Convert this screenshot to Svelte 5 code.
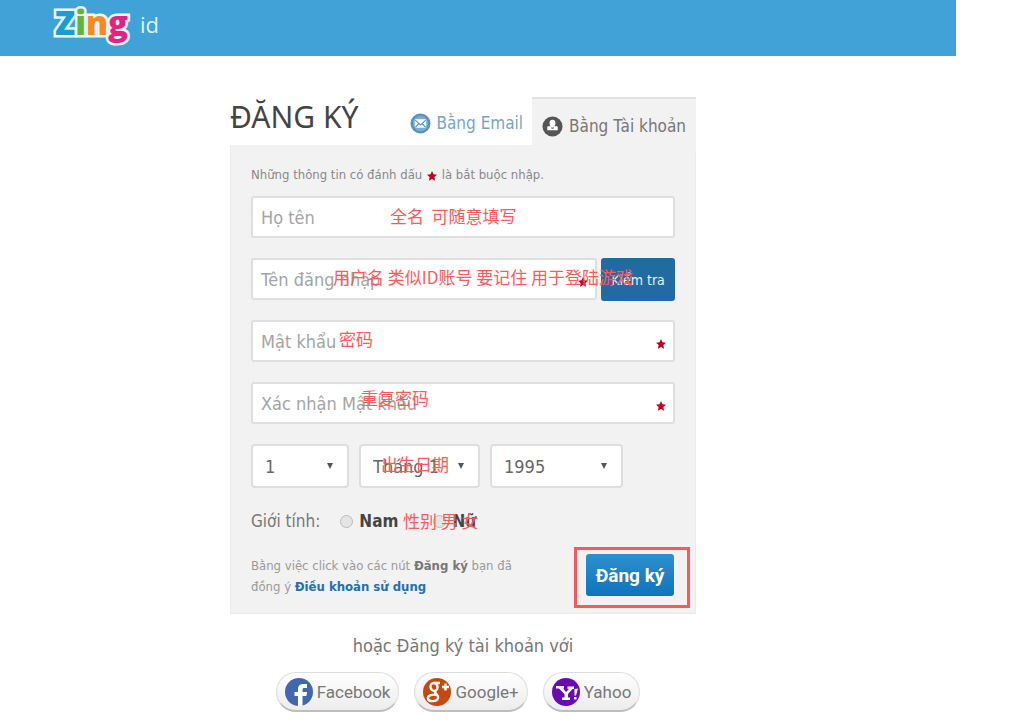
<script>
  const fields = [
    { id: 'fullname', label: 'Họ tên', type: 'text', note: '全名\u00a0 可随意填写', left: 139, top: 8 },
    { id: 'username', label: 'Tên đăng nhập', type: 'text', note: '用户名 类似ID账号 要记住 用于登陆游戏', left: 82, top: 7, star: true, check: true },
    { id: 'password', label: 'Mật khẩu', type: 'password', note: '密码', left: 88, top: 7, star: true },
    { id: 'confirm', label: 'Xác nhận Mật khẩu', type: 'password', note: '重复密码', left: 110, top: 4, star: true }
  ];
  const dates = [
    { id: 'day', label: 'Ngày', value: '1', size: 'small' },
    { id: 'month', label: 'Tháng', value: 'Tháng 1', size: 'medium', note: '出生日期' },
    { id: 'year', label: 'Năm', value: '1995', size: 'large' }
  ];
</script>

{#snippet star()}
  <svg class="star" viewBox="0 0 10 10" aria-hidden="true"><path d="M5 0 6.5 3.2 10 3.7 7.4 6 8 9.7 5 8 2 9.7 2.6 6 0 3.7 3.5 3.2Z" /></svg>
{/snippet}

<header>
  <a class="logo" href="#home" aria-label="Zing id">
    <span class="zing"><span class="z">Z</span><span class="i">i</span><span class="n">n</span><span class="g">g</span></span>
    <span class="id">id</span>
  </a>
</header>

<main>
  <div class="top">
    <h1>ĐĂNG KÝ</h1>
    <nav>
      <a class="tab" href="#email">
        <svg viewBox="0 0 22 22" aria-hidden="true">
          <circle cx="11" cy="11" r="10.5" fill="#5494bd" />
          <circle cx="11" cy="11" r="8" fill="#77add0" />
          <rect x="5" y="6.500" width="12" height="9" rx="1" fill="#fff" />
          <path d="m5.500 7.500 5.500 5 5.500-5M5.500 15l3.500-3.500m7.500 3.500-3.500-3.500" fill="none" stroke="#5494bd" stroke-width="1.200" />
        </svg>
        Bằng Email
      </a>
      <a class="tab active" href="#account">
        <svg viewBox="0 0 22 22" aria-hidden="true">
          <circle cx="11" cy="11" r="10.5" fill="#555" />
          <path d="M8 7a3 3 0 0 1 6 0v1.500c0 1-.5 1.700-1 2.200h2c1 0 1.500.5 1.500 1.300v3h-11v-3c0-.8.5-1.300 1.500-1.300h2c-.5-.5-1-1.200-1-2.200Z" fill="#fff" />
          <path d="m9.800 11 1.200 1.200 1.200-1.200v2.500H9.800Z" fill="#888" />
        </svg>
        Bằng Tài khoản
      </a>
    </nav>
  </div>

  <form onsubmit={(e) => e.preventDefault()}>
    <p class="hint">Những thông tin có đánh dấu {@render star()} là bắt buộc nhập.</p>

    {#each fields as f}
      <div class="row">
        <div class="field">
          <input id={f.id} type={f.type} placeholder={f.label} aria-label={f.label} />
          {#if f.star}<span class="required">{@render star()}</span>{/if}
        </div>
        {#if f.check}<button class="check" type="button">Kiểm tra</button>{/if}
        <span class="note" style="left: {f.left}px; top: {f.top}px">{f.note}</span>
      </div>
    {/each}

    <div class="dates">
      {#each dates as d}
        <div class="date {d.size}">
          <select id={d.id} aria-label={d.label}><option>{d.value}</option></select>
          <svg class="arrow" viewBox="0 0 6 6" aria-hidden="true"><path d="M0 0h6L3 6Z" /></svg>
          {#if d.note}<span class="note birth">{d.note}</span>{/if}
        </div>
      {/each}
    </div>

    <div class="gender" role="radiogroup" aria-labelledby="gender-label">
      <span id="gender-label">Giới tính:</span>
      <label><input type="radio" name="gender" />Nam</label>
      <label class="female"><input type="radio" name="gender" />Nữ</label>
      <span class="note sex">性别 男 女</span>
    </div>

    <div class="bottom">
      <p>Bằng việc click vào các nút <b>Đăng ký</b> bạn đã đồng ý <a href="#terms">Điều khoản sử dụng</a></p>
      <div class="frame"><button class="submit" type="submit">Đăng ký</button></div>
    </div>
  </form>

  <p class="or">hoặc Đăng ký tài khoản với</p>
  <div class="social">
    <button type="button">
      <svg viewBox="0 0 28 28" aria-hidden="true">
        <circle cx="14" cy="14" r="14" fill="#4267ae" />
        <path d="M13 28V18H9.500v-4H13v-2.500C13 7.500 15 6 18.500 6H22v4h-2.500c-1.500 0-2 .6-2 2v2H22l-.6 4h-3.900v10Z" fill="#fff" />
      </svg>
      Facebook
    </button>
    <button type="button">
      <svg viewBox="0 0 28 28" aria-hidden="true">
        <circle cx="14" cy="14" r="14" fill="#c8470d" />
        <g fill="none" stroke="#fff" stroke-width="2.400">
          <ellipse cx="11" cy="9" rx="3.500" ry="4" transform="rotate(-15 11 9)" />
          <path d="M11 5h6M13 13c-3 2 3 3 2 7-1 4-9 4-10 1-1-4 5-5 9-4M19 9h7M22.500 5.500v7" />
        </g>
      </svg>
      Google+
    </button>
    <button type="button">
      <svg viewBox="0 0 28 28" aria-hidden="true">
        <circle cx="14" cy="14" r="14" fill="#6a0bb0" />
        <path d="M4 8h8v2.500h-1l3 3.500 3-3h-1.500V8.500H22V11h-1.500L16 16v3.500h2V22h-8v-2.500h2.500V16L7 10.500H4ZM22.500 11l3.500-.5-2 7h-1.500ZM22 19h2.500v2.500H22Z" fill="#fff" />
      </svg>
      Yahoo
    </button>
  </div>
</main>

<style>
  :global(body) {
    margin: 0;
    background: #fff;
    color: #666;
    font-family: "DejaVu Sans Condensed", "DejaVu Sans", "Noto Sans CJK SC", sans-serif;
    font-size: 17px;
  }
  * { box-sizing: border-box; }
  h1, p { margin: 0; }
  a { text-decoration: none; }
  input, select, button { font-family: inherit; margin: 0; }

  header {
    height: 56px;
    margin-right: 62px;
    padding-left: 55px;
    background: #40a2d7;
    border-bottom: 2px solid #459fdb;
  }
  .logo { display: inline-flex; align-items: center; gap: 12px; color: #dff3fc; }
  .zing { font: 800 33px/45px "Open Sans", sans-serif; paint-order: stroke; -webkit-text-stroke: 5px #e9f5fa; }
  .z { color: #169fd0; }
  .i { color: #67b33a; }
  .n { color: #f58b1c; }
  .g { color: #e8207e; }
  .id { padding-top: 3px; font: 22px "Open Sans", sans-serif; }

  main { max-width: 466px; margin: 41px 0 0 230px; }
  .top { display: flex; justify-content: space-between; height: 48px; }
  h1 { color: #444; font: 30px/40px "Noto Sans", sans-serif; white-space: nowrap; }
  nav { display: flex; }
  .tab {
    display: flex;
    align-items: center;
    gap: 6px;
    height: 48px;
    padding: 4px 9px 0 0;
    color: #76a5c6;
    font-size: 17px;
    white-space: nowrap;
  }
  .tab svg { width: 21px; height: 21px; }
  .active {
    height: 56px;
    padding: 0 10px;
    background: #f2f2f2;
    border-top: 2px solid #e2e2e2;
    color: #777;
  }

  form {
    padding: 20px 20px 5px;
    background: #f2f2f2;
    border: solid #ebebeb;
    border-width: 0 1px 1px;
  }
  .hint { height: 20px; margin-bottom: 11px; font-size: 13px; line-height: 20px; color: #888; }
  .star { width: 10px; height: 10px; margin: 0 1px; vertical-align: -2px; fill: #c4001d; }
  .row { position: relative; display: flex; gap: 4px; margin-bottom: 20px; }
  .field { position: relative; flex: 1; }
  .field input {
    display: block;
    width: 100%;
    height: 42px;
    padding: 0 8px;
    border: 2px solid #dedede;
    border-radius: 3px;
    background: #fff;
    color: #666;
    font-size: 18px;
  }
  .field input::placeholder { color: #a4a4a4; opacity: 1; }
  .required { position: absolute; right: 8px; top: 11px; }
  .check {
    width: 74px;
    height: 43px;
    margin-bottom: -1px;
    padding: 0;
    border: 0;
    border-radius: 3px;
    background: #216ba2;
    color: #e6f1f8;
    font-size: 14px;
  }
  .note {
    position: absolute;
    color: #ff5a5a;
    font: 17px/24px "Noto Sans CJK SC", sans-serif;
    white-space: nowrap;
    pointer-events: none;
  }

  .dates { display: flex; gap: 10px; }
  .date { position: relative; }
  .small { width: 98px; }
  .medium { width: 121px; }
  .large { width: 133px; }
  select {
    width: 100%;
    height: 44px;
    padding: 0 12px;
    appearance: none;
    border: 2px solid #dedede;
    border-radius: 4px;
    background: #fff;
    color: #666;
    font-size: 18px;
  }
  .arrow { position: absolute; right: 16px; top: 19px; width: 6px; height: 6px; fill: #555; }
  .birth { left: 22px; top: 8px; }

  .gender { position: relative; display: flex; align-items: center; height: 24px; margin-top: 21px; color: #777; }
  .gender label { display: flex; align-items: center; gap: 6px; margin-left: 20px; color: #444; font-weight: bold; }
  .gender .female { margin-left: 35px; }
  .gender input {
    width: 13px;
    height: 13px;
    appearance: none;
    border: 1px solid #bbb;
    border-radius: 50%;
    background: #e5e5e5;
  }
  .sex { left: 152px; top: 0; }

  .bottom { display: flex; justify-content: space-between; margin: 14px -15px 0 0; }
  .bottom p { width: 280px; padding-top: 8px; color: #999; font-size: 13px; line-height: 21px; }
  .bottom b { color: #777; }
  .bottom a { color: #2370b5; font-weight: bold; }
  .frame { padding: 4px 13px 9px 9px; border: 3px solid #f25c5c; }
  .submit {
    display: block;
    width: 88px;
    height: 42px;
    padding: 0;
    border: 0;
    border-radius: 3px;
    background: linear-gradient(#308fcb, #0c75bd);
    color: #fff;
    font: bold 19px Roboto, sans-serif;
  }

  .or { margin-top: 19px; font-size: 18px; line-height: 26px; text-align: center; color: #777; }
  .social { display: flex; justify-content: center; gap: 15px; margin: 13px 10px 0 0; }
  .social button {
    display: flex;
    align-items: center;
    gap: 4px;
    height: 40px;
    padding: 0 8px;
    border: 1px solid #ddd;
    border-bottom: 2px solid #bdbdbd;
    border-radius: 20px;
    background: linear-gradient(#fff, #ececec);
    color: #777;
    font: 17px Roboto, sans-serif;
  }
  .social svg { width: 28px; height: 28px; }
</style>
